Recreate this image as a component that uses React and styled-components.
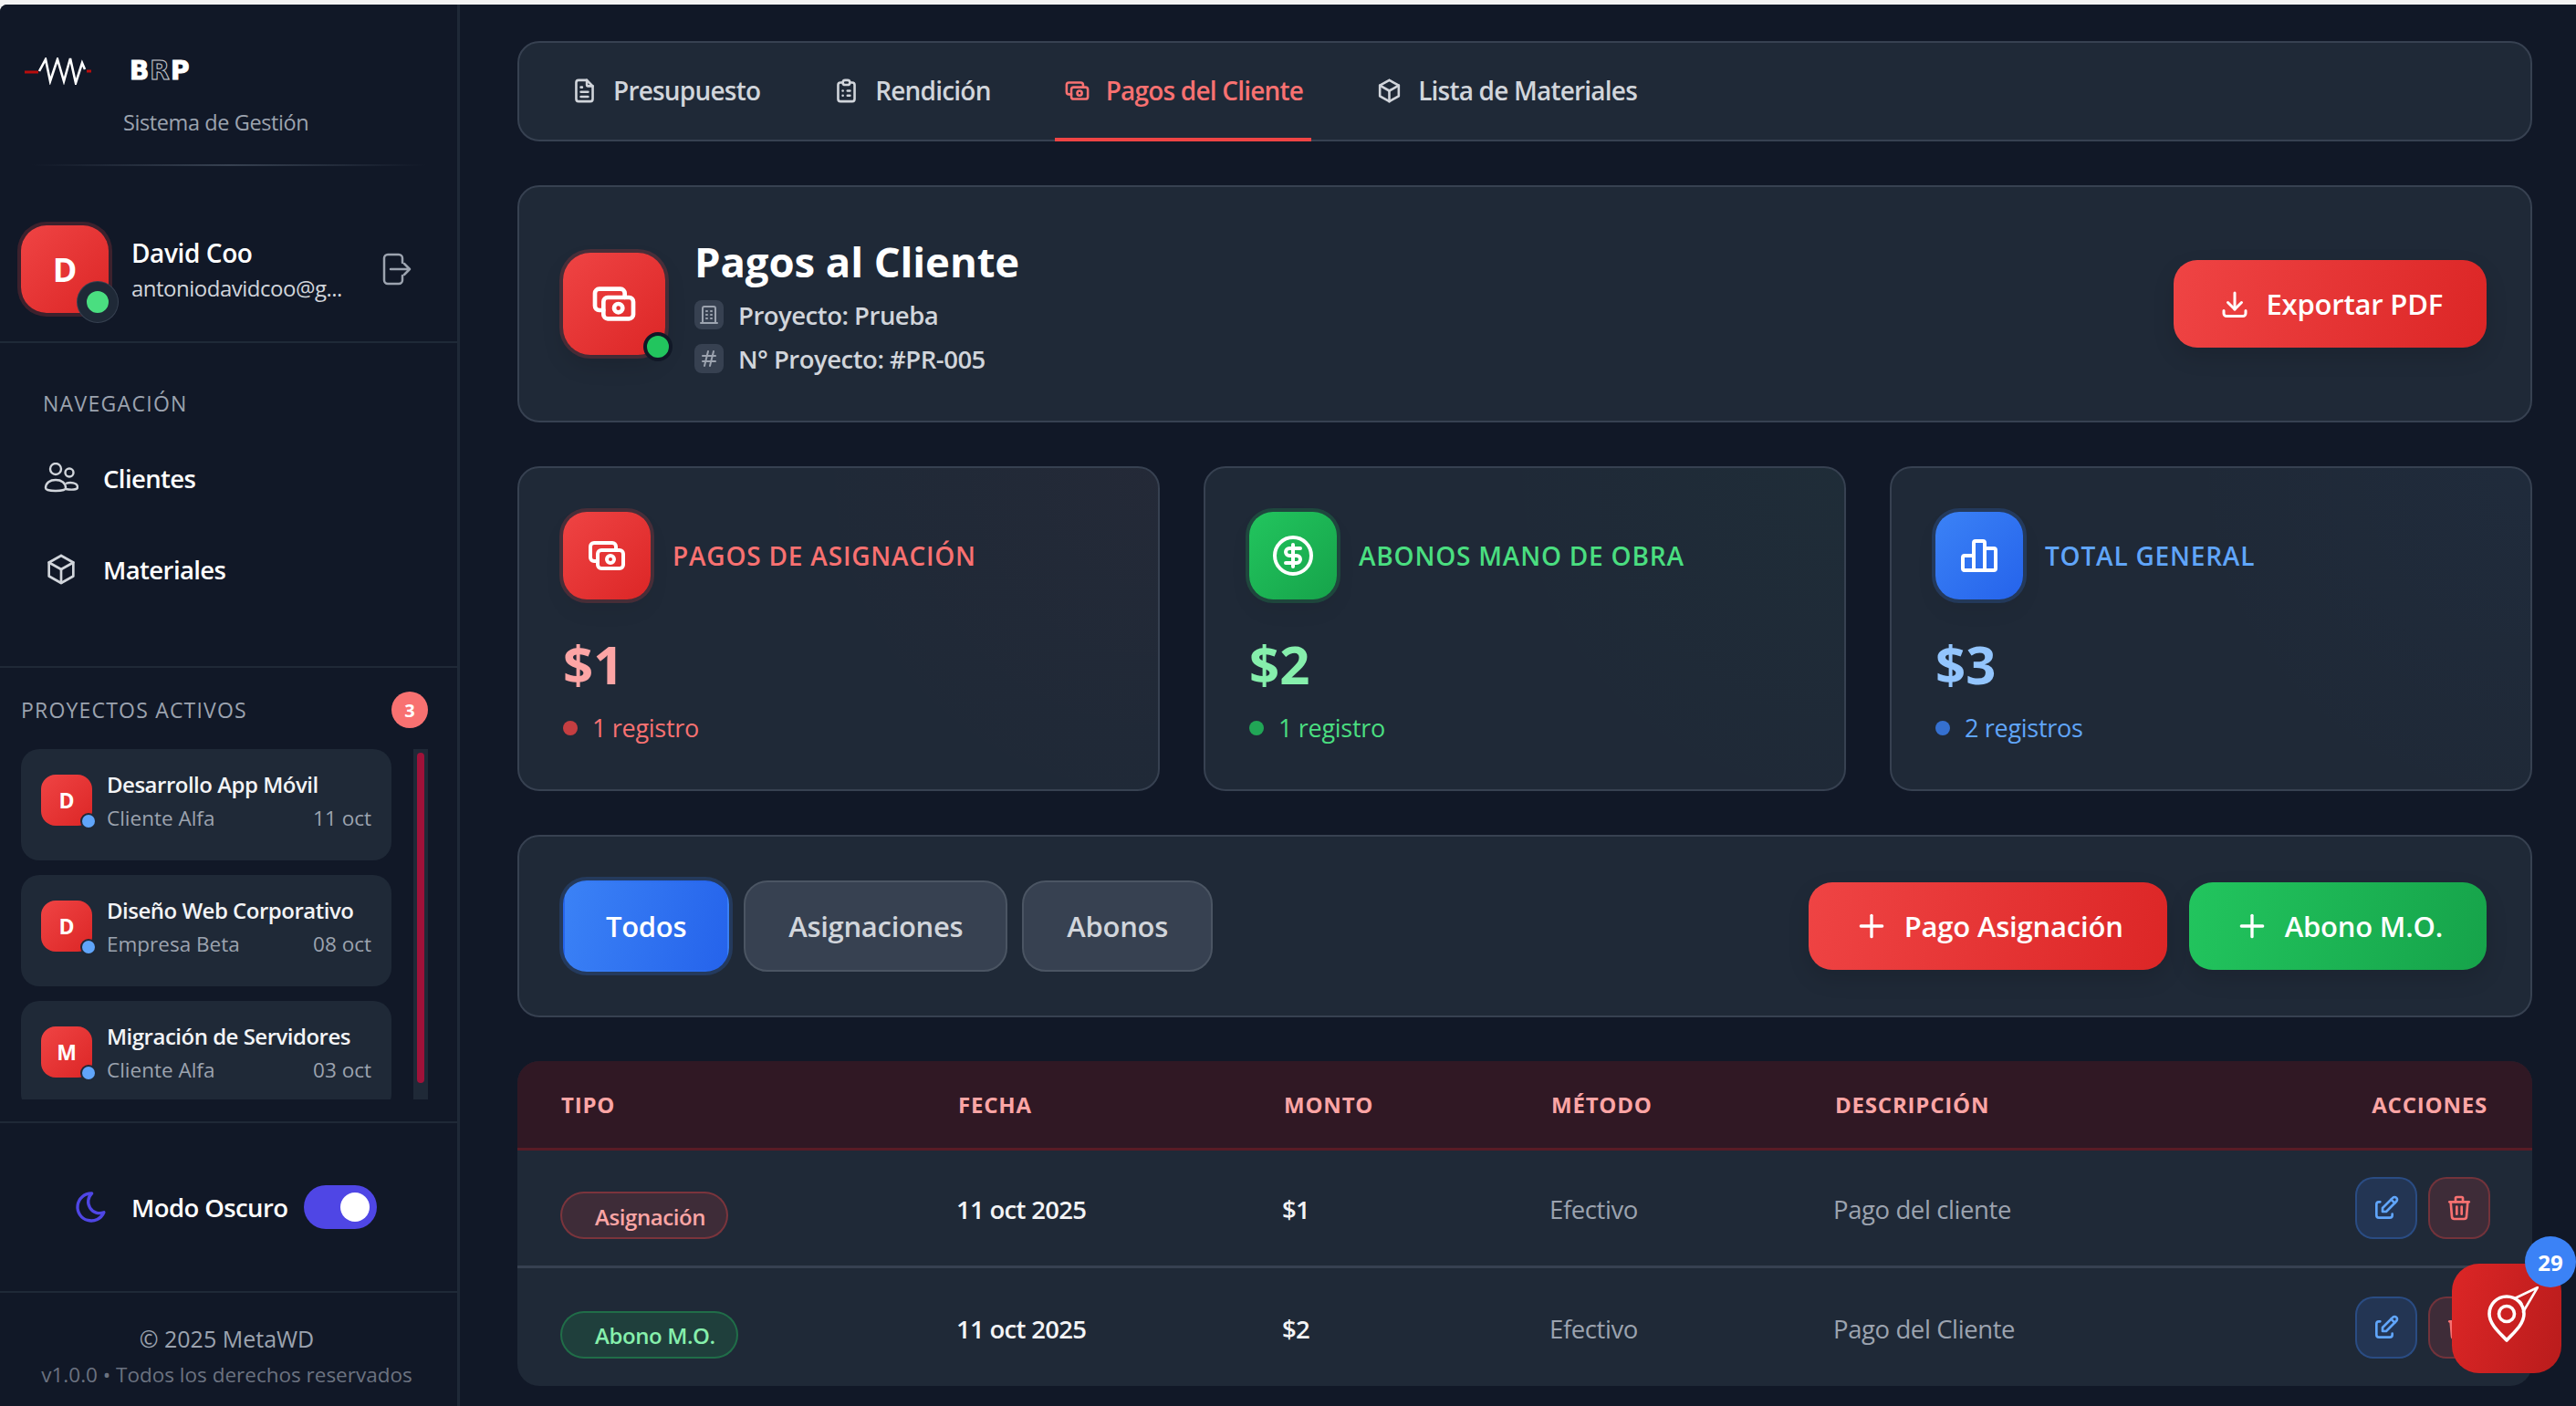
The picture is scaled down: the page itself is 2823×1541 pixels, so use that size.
import styled, { createGlobalStyle } from "styled-components";
import {
  TbCash,
  TbChartBar,
  TbBox,
  TbBuilding,
  TbClipboardList,
  TbDownload,
  TbEdit,
  TbFileText,
  TbHash,
  TbMoon,
  TbPlus,
  TbTrash,
} from "react-icons/tb";
import { LuCircleDollarSign } from "react-icons/lu";

const tones = {
  red: { from: "#ef4444", to: "#dc2626", ring: "239,68,68", label: "#f87171", value: "#fca5a5" },
  green: { from: "#22c55e", to: "#16a34a", ring: "34,197,94", label: "#4ade80", value: "#86efac" },
  blue: { from: "#3b82f6", to: "#2563eb", ring: "59,130,246", label: "#60a5fa", value: "#93c5fd" },
};

const tabs = [
  { name: "Presupuesto", icon: TbFileText },
  { name: "Rendición", icon: TbClipboardList },
  { name: "Pagos del Cliente", icon: TbCash, active: true },
  { name: "Lista de Materiales", icon: TbBox },
];

const stats = [
  { tone: "red", icon: TbCash, label: "PAGOS DE ASIGNACIÓN", value: "$1", note: "1 registro" },
  { tone: "green", icon: LuCircleDollarSign, label: "ABONOS MANO DE OBRA", value: "$2", note: "1 registro" },
  { tone: "blue", icon: TbChartBar, label: "TOTAL GENERAL", value: "$3", note: "2 registros" },
];

const projects = [
  { initial: "D", name: "Desarrollo App Móvil", client: "Cliente Alfa", date: "11 oct" },
  { initial: "D", name: "Diseño Web Corporativo", client: "Empresa Beta", date: "08 oct" },
  { initial: "M", name: "Migración de Servidores", client: "Cliente Alfa", date: "03 oct" },
];

const payments = [
  { tone: "red", type: "Asignación", date: "11 oct 2025", amount: "$1", method: "Efectivo", text: "Pago del cliente" },
  { tone: "green", type: "Abono M.O.", date: "11 oct 2025", amount: "$2", method: "Efectivo", text: "Pago del Cliente" },
];

export default function App() {
  return (
    <>
      <GlobalStyle />
      <Shell>
        <Sidebar>
          <Brand>
            <LogoRow>
              <svg width="74" height="30" viewBox="0 0 74 30" fill="none">
                <path d="M0 16h15M68 15h5" stroke="#b80d0d" strokeWidth="3" />
                <path
                  d="M16 15 L23 2 L28 26 L36 2 L43 26 L50 1 L56 28 L63 6 L66 13"
                  stroke="#fff"
                  strokeWidth="2.6"
                  strokeLinejoin="miter"
                />
              </svg>
              <LogoText>
                B<LogoOutline>R</LogoOutline>P
              </LogoText>
            </LogoRow>
            <BrandCaption>Sistema de Gestión</BrandCaption>
            <FadeLine />
          </Brand>

          <UserBlock>
            <UserAvatar>
              D<OnlineDot />
            </UserAvatar>
            <UserText>
              <UserName>David Coo</UserName>
              <UserMail>antoniodavidcoo@g...</UserMail>
            </UserText>
            <svg width="32" height="36" viewBox="0 0 32 36" fill="none" stroke="#9ca3af" strokeWidth="2.5" strokeLinecap="round" strokeLinejoin="round">
              <path d="M22 11V6a4 4 0 0 0-4-4H6a4 4 0 0 0-4 4v24a4 4 0 0 0 4 4h12a4 4 0 0 0 4-4v-5" />
              <path d="M9 18h21M24 12l6 6-6 6" />
            </svg>
          </UserBlock>

          <NavBlock>
            <NavTitle>NAVEGACIÓN</NavTitle>
            <NavList>
              <NavItem>
                <NavIcon>
                  <svg width="38" height="34" viewBox="0 0 38 34" fill="none" stroke="#d1d5db" strokeWidth="2.4">
                    <circle cx="13" cy="7" r="6" />
                    <circle cx="28" cy="11" r="4.5" />
                    <path d="M2 28c0-6 5-9 11-9s11 3 11 9c0 4-22 4-22 0z" />
                    <path d="M24 23c5-2 13-1 13 4 0 3-7 3-13 2" />
                  </svg>
                </NavIcon>
                Clientes
              </NavItem>
              <NavItem>
                <NavIcon>
                  <TbBox size={40} color="#d1d5db" strokeWidth={1.6} />
                </NavIcon>
                Materiales
              </NavItem>
            </NavList>
          </NavBlock>

          <ProjectsBlock>
            <ProjectsHead>
              <ProjectsTitle>PROYECTOS ACTIVOS</ProjectsTitle>
              <CountBadge>3</CountBadge>
            </ProjectsHead>
            <ProjectsBody>
              <ProjectList>
                {projects.map((p) => (
                  <ProjectCard key={p.name}>
                    <ProjectAvatar>
                      {p.initial}
                      <ProjectDot />
                    </ProjectAvatar>
                    <ProjectText>
                      <ProjectName>{p.name}</ProjectName>
                      <ProjectMeta>
                        <span>{p.client}</span>
                        <span>{p.date}</span>
                      </ProjectMeta>
                    </ProjectText>
                  </ProjectCard>
                ))}
              </ProjectList>
              <ScrollTrack>
                <ScrollThumb />
              </ScrollTrack>
            </ProjectsBody>
          </ProjectsBlock>

          <ModeBlock>
            <TbMoon size={40} color="#4f46e5" />
            <ModeLabel>Modo Oscuro</ModeLabel>
            <Toggle>
              <ToggleKnob />
            </Toggle>
          </ModeBlock>

          <FooterBlock>
            <FooterMain>© 2025 MetaWD</FooterMain>
            <FooterSub>v1.0.0 • Todos los derechos reservados</FooterSub>
          </FooterBlock>
        </Sidebar>

        <Main>
          <TabBar>
            {tabs.map((t) => (
              <Tab key={t.name} $active={t.active}>
                <t.icon size={31} />
                {t.name}
              </Tab>
            ))}
          </TabBar>

          <HeaderCard>
            <HeaderLeft>
              <HeaderIcon>
                <TbCash size={56} />
                <HeaderDot />
              </HeaderIcon>
              <HeaderText>
                <PageTitle>Pagos al Cliente</PageTitle>
                <MetaLine>
                  <MetaIcon>
                    <TbBuilding size={24} />
                  </MetaIcon>
                  Proyecto: Prueba
                </MetaLine>
                <MetaLine>
                  <MetaIcon>
                    <TbHash size={24} />
                  </MetaIcon>
                  N° Proyecto: #PR-005
                </MetaLine>
              </HeaderText>
            </HeaderLeft>
            <ActionButton $tone="red">
              <TbDownload size={36} />
              Exportar PDF
            </ActionButton>
          </HeaderCard>

          <StatsGrid>
            {stats.map((s) => (
              <StatCard key={s.label} $tone={s.tone}>
                <StatHead>
                  <StatIcon $tone={s.tone}>
                    <s.icon size={48} />
                  </StatIcon>
                  <StatLabel $tone={s.tone}>{s.label}</StatLabel>
                </StatHead>
                <StatValue $tone={s.tone}>{s.value}</StatValue>
                <StatNote $tone={s.tone}>
                  <StatDot $tone={s.tone} />
                  {s.note}
                </StatNote>
              </StatCard>
            ))}
          </StatsGrid>

          <FilterCard>
            <FilterGroup>
              <FilterChip $active>Todos</FilterChip>
              <FilterChip>Asignaciones</FilterChip>
              <FilterChip>Abonos</FilterChip>
            </FilterGroup>
            <FilterGroup>
              <ActionButton $tone="red">
                <TbPlus size={40} />
                Pago Asignación
              </ActionButton>
              <ActionButton $tone="green">
                <TbPlus size={40} />
                Abono M.O.
              </ActionButton>
            </FilterGroup>
          </FilterCard>

          <TableCard>
            <TableHead>
              <span>TIPO</span>
              <span>FECHA</span>
              <span>MONTO</span>
              <span>MÉTODO</span>
              <span>DESCRIPCIÓN</span>
              <HeadRight>ACCIONES</HeadRight>
            </TableHead>
            {payments.map((p) => (
              <TableRow key={p.type}>
                <div>
                  <TypePill $tone={p.tone}>{p.type}</TypePill>
                </div>
                <CellStrong>{p.date}</CellStrong>
                <CellStrong>{p.amount}</CellStrong>
                <CellMethod>{p.method}</CellMethod>
                <CellText>{p.text}</CellText>
                <RowActions>
                  <RowButton $tone="blue">
                    <TbEdit size={32} />
                  </RowButton>
                  <RowButton $tone="red">
                    <TbTrash size={32} />
                  </RowButton>
                </RowActions>
              </TableRow>
            ))}
          </TableCard>
        </Main>

        <FloatButton>
          <svg width="70" height="70" viewBox="0 0 70 70" fill="none" stroke="#fff" strokeWidth="3.6" strokeLinejoin="round" strokeLinecap="round">
            <path d="M35 59C29 52 16 42 16 30a19 19 0 0 1 38 0c0 12-13 22-19 29z" />
            <circle cx="35" cy="30" r="8.5" />
            <path d="M44 13 69 1 53 28" strokeWidth="2.6" />
            <path d="M46 14c3 1 5 3 6 5" strokeWidth="1.6" />
          </svg>
          <FloatBadge>29</FloatBadge>
        </FloatButton>
      </Shell>
    </>
  );
}

const GlobalStyle = createGlobalStyle`
  html, body {
    margin: 0;
    height: 100%;
    overflow: hidden;
    background: #f3f3f3;
  }
  * {
    box-sizing: border-box;
  }
  body {
    font-family: "Open Sans", "Noto Sans", sans-serif;
  }
`;

const Shell = styled.div`
  display: flex;
  height: 1536px;
  margin-top: 5px;
  background: #111827;
  border-top-left-radius: 8px;
  overflow: hidden;
`;

const Sidebar = styled.aside`
  width: 504px;
  flex: none;
  display: flex;
  flex-direction: column;
  background: #111827;
  border-right: 3px solid #1f2937;
`;

const Brand = styled.div`
  height: 187px;
  padding: 56px 35px 0 27px;
`;

const LogoRow = styled.div`
  display: flex;
  align-items: center;
  gap: 41px;
  height: 34px;
`;

const LogoText = styled.span`
  font-family: "DejaVu Sans", sans-serif;
  font-weight: 700;
  font-size: 28px;
  line-height: 1;
  letter-spacing: 1px;
  color: #fff;
  -webkit-text-stroke: 1px #fff;
`;

const LogoOutline = styled.span`
  color: #111827;
  -webkit-text-stroke: 1px #c9ccd1;
`;

const BrandCaption = styled.div`
  margin: 23px 0 0 108px;
  font-size: 23.5px;
  line-height: 32px;
  letter-spacing: -0.4px;
  color: #9ca3af;
`;

const FadeLine = styled.div`
  height: 2px;
  margin: 30px 0 0 8px;
  background: linear-gradient(90deg, transparent, #374151, transparent);
`;

const UserBlock = styled.div`
  height: 184px;
  display: flex;
  align-items: center;
  padding: 24px 50px 0 23px;
  border-bottom: 2px solid #1f2937;
  & > svg {
    flex: none;
  }
`;

const UserAvatar = styled.div`
  position: relative;
  width: 96px;
  height: 96px;
  flex: none;
  display: flex;
  align-items: center;
  justify-content: center;
  border-radius: 28px;
  background: linear-gradient(135deg, #ef4444, #dc2626);
  box-shadow: 0 0 0 4px rgba(239, 68, 68, 0.2);
  color: #fff;
  font-size: 36px;
  font-weight: 700;
`;

const OnlineDot = styled.span`
  position: absolute;
  right: -10px;
  bottom: -10px;
  width: 44px;
  height: 44px;
  border-radius: 50%;
  background: #4ade80;
  border: 10px solid #1f2937;
  box-shadow: 0 0 0 1px #374151;
`;

const UserText = styled.div`
  flex: 1;
  min-width: 0;
  margin-left: 25px;
`;

const UserName = styled.div`
  font-size: 28px;
  line-height: 38px;
  font-weight: 600;
  letter-spacing: -0.4px;
  color: #fff;
`;

const UserMail = styled.div`
  margin-top: 4px;
  font-size: 24px;
  line-height: 32px;
  letter-spacing: -0.5px;
  white-space: nowrap;
  color: #d1d5db;
`;

const NavBlock = styled.nav`
  height: 356px;
  padding: 50px 0 0 47px;
  border-bottom: 2px solid #1f2937;
`;

const NavTitle = styled.div`
  font-size: 23px;
  line-height: 32px;
  font-weight: 500;
  letter-spacing: 1.3px;
  color: #9ca3af;
`;

const NavList = styled.div`
  margin-top: 16px;
`;

const NavItem = styled.div`
  height: 100px;
  display: flex;
  align-items: center;
  gap: 26px;
  font-size: 27.5px;
  font-weight: 600;
  letter-spacing: -0.6px;
  color: #fff;
`;

const NavIcon = styled.span`
  width: 40px;
  display: flex;
  justify-content: center;
`;

const ProjectsBlock = styled.section`
  height: 499px;
  padding: 24px 32px 0 23px;
  border-bottom: 2px solid #1f2937;
`;

const ProjectsHead = styled.div`
  height: 44px;
  display: flex;
  align-items: center;
  justify-content: space-between;
`;

const ProjectsTitle = styled.div`
  font-size: 23px;
  font-weight: 500;
  letter-spacing: 1.2px;
  color: #9ca3af;
`;

const CountBadge = styled.div`
  width: 40px;
  height: 40px;
  display: flex;
  align-items: center;
  justify-content: center;
  border-radius: 50%;
  background: #f87171;
  color: #fff;
  font-size: 20px;
  font-weight: 700;
`;

const ProjectsBody = styled.div`
  display: flex;
  justify-content: space-between;
  height: 384px;
  margin-top: 21px;
`;

const ProjectList = styled.div`
  width: 406px;
  display: flex;
  flex-direction: column;
  gap: 16px;
  overflow: hidden;
`;

const ProjectCard = styled.div`
  flex: none;
  height: 122px;
  display: flex;
  gap: 16px;
  padding: 28px 22px 0;
  border-radius: 20px;
  background: #1f2937;
`;

const ProjectAvatar = styled.div`
  position: relative;
  flex: none;
  width: 56px;
  height: 56px;
  display: flex;
  align-items: center;
  justify-content: center;
  border-radius: 16px;
  background: linear-gradient(135deg, #ef4444, #dc2626);
  color: #fff;
  font-size: 23px;
  font-weight: 700;
`;

const ProjectDot = styled.span`
  position: absolute;
  right: -3px;
  bottom: -2px;
  width: 14px;
  height: 14px;
  border-radius: 50%;
  background: #60a5fa;
  box-shadow: 0 0 0 2px #1f2937;
`;

const ProjectText = styled.div`
  flex: 1;
  min-width: 0;
  margin-top: -6px;
`;

const ProjectName = styled.div`
  font-size: 24px;
  line-height: 34px;
  font-weight: 600;
  letter-spacing: -0.5px;
  white-space: nowrap;
  color: #f3f4f6;
`;

const ProjectMeta = styled.div`
  display: flex;
  justify-content: space-between;
  margin-top: 3px;
  font-size: 22.5px;
  line-height: 34px;
  color: #9ca3af;
`;

const ScrollTrack = styled.div`
  width: 16px;
  height: 384px;
  padding: 4px;
  background: #1f2937;
`;

const ScrollThumb = styled.div`
  height: 362px;
  border-radius: 4px;
  background: #9f1239;
`;

const ModeBlock = styled.div`
  height: 186px;
  display: flex;
  align-items: center;
  padding: 0 0 0 80px;
  border-bottom: 2px solid #1f2937;
`;

const ModeLabel = styled.span`
  margin: 0 18px 0 24px;
  font-size: 27.5px;
  font-weight: 600;
  letter-spacing: -0.6px;
  color: #fff;
`;

const Toggle = styled.div`
  width: 80px;
  height: 48px;
  display: flex;
  align-items: center;
  justify-content: flex-end;
  padding-right: 8px;
  border-radius: 24px;
  background: #4f46e5;
`;

const ToggleKnob = styled.span`
  width: 32px;
  height: 32px;
  border-radius: 50%;
  background: #fff;
`;

const FooterBlock = styled.div`
  padding: 34px 4px 0 0;
  text-align: center;
`;

const FooterMain = styled.div`
  font-size: 25px;
  line-height: 32px;
  font-weight: 500;
  color: #9ca3af;
`;

const FooterSub = styled.div`
  margin-top: 8px;
  font-size: 22.5px;
  line-height: 32px;
  white-space: nowrap;
  color: #6b7280;
`;

const Main = styled.main`
  flex: 1;
  min-width: 0;
  display: flex;
  flex-direction: column;
  gap: 48px;
  padding: 40px 48px 0 63px;
  background: #111827;
`;

const Panel = styled.div`
  background: #1f2937;
  border: 2px solid #374151;
  border-radius: 24px;
`;

const TabBar = styled(Panel)`
  height: 110px;
  display: flex;
  gap: 61px;
  padding-left: 47px;
`;

const Tab = styled.div`
  display: flex;
  align-items: center;
  gap: 16px;
  padding: 0 9px;
  margin-bottom: -2px;
  font-size: 28px;
  font-weight: 600;
  letter-spacing: -0.8px;
  color: ${(p) => (p.$active ? "#f87171" : "#d1d5db")};
  border-bottom: 4px solid ${(p) => (p.$active ? "#ef4444" : "transparent")};
`;

const HeaderCard = styled(Panel)`
  height: 260px;
  display: flex;
  align-items: center;
  justify-content: space-between;
  padding: 0 48px;
`;

const HeaderLeft = styled.div`
  display: flex;
  align-items: center;
  gap: 32px;
`;

const HeaderIcon = styled.div`
  position: relative;
  width: 112px;
  height: 112px;
  display: flex;
  align-items: center;
  justify-content: center;
  border-radius: 30px;
  background: linear-gradient(135deg, #ef4444, #dc2626);
  box-shadow: 0 0 0 4px rgba(239, 68, 68, 0.2), 0 12px 24px rgba(0, 0, 0, 0.12);
  color: #fff;
`;

const HeaderDot = styled.span`
  position: absolute;
  right: -8px;
  bottom: -7px;
  width: 32px;
  height: 32px;
  border-radius: 50%;
  background: #22c55e;
  border: 4px solid #111827;
`;

const HeaderText = styled.div`
  margin-top: 4px;
`;

const PageTitle = styled.div`
  padding-top: 3px;
  margin-bottom: 5px;
  font-size: 45.5px;
  line-height: 60px;
  font-weight: 700;
  letter-spacing: -0.1px;
  color: #fff;
`;

const MetaLine = styled.div`
  display: flex;
  align-items: center;
  gap: 16px;
  height: 48px;
  font-size: 27.5px;
  font-weight: 600;
  letter-spacing: -0.5px;
  color: #d1d5db;
`;

const MetaIcon = styled.span`
  width: 32px;
  height: 32px;
  display: flex;
  align-items: center;
  justify-content: center;
  border-radius: 8px;
  background: #374151;
  color: #9ca3af;
`;

const ActionButton = styled.div`
  height: 96px;
  display: flex;
  align-items: center;
  gap: 16px;
  padding: 0 48px 0 49px;
  border-radius: 26px;
  background: linear-gradient(
    105deg,
    ${(p) => tones[p.$tone].from},
    ${(p) => tones[p.$tone].to}
  );
  box-shadow: 0 10px 24px rgba(0, 0, 0, 0.12);
  color: #fff;
  font-size: 31px;
  font-weight: 600;
  letter-spacing: -0.2px;
  white-space: nowrap;
`;

const StatsGrid = styled.div`
  display: grid;
  grid-template-columns: repeat(3, 1fr);
  gap: 48px;
`;

const StatCard = styled(Panel)`
  height: 356px;
  padding: 48px;
  background: radial-gradient(
      circle at 100% 0,
      rgba(${(p) => tones[p.$tone].ring}, 0.025),
      transparent 50%
    ),
    #1f2937;
`;

const StatHead = styled.div`
  display: flex;
  align-items: center;
  gap: 24px;
`;

const StatIcon = styled.div`
  width: 96px;
  height: 96px;
  display: flex;
  align-items: center;
  justify-content: center;
  border-radius: 26px;
  background: linear-gradient(
    135deg,
    ${(p) => tones[p.$tone].from},
    ${(p) => tones[p.$tone].to}
  );
  box-shadow: 0 0 0 4px rgba(${(p) => tones[p.$tone].ring}, 0.2), 0 12px 24px rgba(0, 0, 0, 0.06);
  color: #fff;
`;

const StatLabel = styled.div`
  font-size: 28px;
  font-weight: 600;
  letter-spacing: 0.8px;
  color: ${(p) => tones[p.$tone].label};
`;

const StatValue = styled.div`
  margin-top: 33px;
  font-size: 58px;
  line-height: 76px;
  font-weight: 700;
  color: ${(p) => tones[p.$tone].value};
`;

const StatNote = styled.div`
  display: flex;
  align-items: center;
  gap: 16px;
  margin-top: 14px;
  font-size: 27px;
  line-height: 36px;
  letter-spacing: -0.3px;
  color: ${(p) => tones[p.$tone].label};
`;

const StatDot = styled.span`
  width: 16px;
  height: 16px;
  border-radius: 50%;
  background: ${(p) => tones[p.$tone].from};
  opacity: 0.8;
`;

const FilterCard = styled(Panel)`
  height: 200px;
  display: flex;
  align-items: center;
  justify-content: space-between;
  padding: 0 48px;
`;

const FilterGroup = styled.div`
  display: flex;
  align-items: center;
  gap: 16px;
  & + & {
    gap: 24px;
  }
`;

const FilterChip = styled.div`
  height: 100px;
  display: flex;
  align-items: center;
  padding: 0 ${(p) => (p.$active ? "45px" : "47px")};
  border-radius: 26px;
  border: 2px solid ${(p) => (p.$active ? "transparent" : "#4b5563")};
  background: ${(p) => (p.$active ? "linear-gradient(105deg, #3b82f6, #2563eb)" : "#374151")};
  box-shadow: ${(p) => (p.$active ? "0 0 0 4px rgba(59, 130, 246, 0.2)" : "none")};
  color: ${(p) => (p.$active ? "#fff" : "#d1d5db")};
  font-size: 31px;
  font-weight: 600;
  letter-spacing: -0.3px;
`;

const TableCard = styled.div`
  border-radius: 24px;
  overflow: hidden;
  background: #1f2937;
`;

const columns = "435px 357px 293px 311px 1fr 148px";

const TableHead = styled.div`
  display: grid;
  grid-template-columns: ${columns};
  align-items: center;
  height: 98px;
  padding: 0 46px 0 48px;
  background: #301824;
  border-bottom: 3px solid #591c26;
  color: #fca5a5;
  font-size: 24px;
  font-weight: 700;
  letter-spacing: 0.8px;
`;

const HeadRight = styled.span`
  text-align: right;
  padding-right: 3px;
`;

const TableRow = styled.div`
  display: grid;
  grid-template-columns: 434px 357px 293px 311px 1fr 148px;
  align-items: center;
  height: 129px;
  padding: 0 46px 0 47px;
  border-bottom: 3px solid #374151;
  font-size: 27.5px;
  letter-spacing: -0.4px;
  &:last-child {
    border-bottom: 0;
  }
`;

const TypePill = styled.span`
  display: inline-flex;
  align-items: center;
  height: 52px;
  margin-top: 16px;
  padding: 2px 23px 0 36px;
  border-radius: 26px;
  background: rgba(${(p) => tones[p.$tone].ring}, 0.15);
  border: 2px solid rgba(${(p) => tones[p.$tone].ring}, 0.35);
  color: ${(p) => tones[p.$tone].value};
  font-size: 24px;
  font-weight: 600;
  letter-spacing: -0.4px;
`;

const CellStrong = styled.span`
  font-weight: 600;
  letter-spacing: -0.7px;
  color: #f3f4f6;
  margin-top: 3px;
`;

const CellMethod = styled.span`
  font-weight: 500;
  color: #9ca3af;
  margin-top: 3px;
`;

const CellText = styled.span`
  color: #9ca3af;
  margin-top: 3px;
`;

const RowActions = styled.div`
  display: flex;
  justify-content: flex-end;
  gap: 12px;
`;

const RowButton = styled.div`
  width: 68px;
  height: 68px;
  display: flex;
  align-items: center;
  justify-content: center;
  border-radius: 20px;
  background: rgba(${(p) => tones[p.$tone].ring}, 0.15);
  border: 2px solid rgba(${(p) => tones[p.$tone].ring}, 0.3);
  color: ${(p) => tones[p.$tone].label};
`;

const FloatButton = styled.div`
  position: fixed;
  left: 2687px;
  top: 1385px;
  width: 120px;
  height: 120px;
  display: flex;
  align-items: center;
  justify-content: center;
  border-radius: 30px;
  background: linear-gradient(105deg, #dc2626, #b91c1c);
`;

const FloatBadge = styled.div`
  position: absolute;
  top: -30px;
  right: -16px;
  width: 56px;
  height: 56px;
  display: flex;
  align-items: center;
  justify-content: center;
  border-radius: 50%;
  background: #3b82f6;
  color: #fff;
  font-size: 24px;
  font-weight: 700;
`;
